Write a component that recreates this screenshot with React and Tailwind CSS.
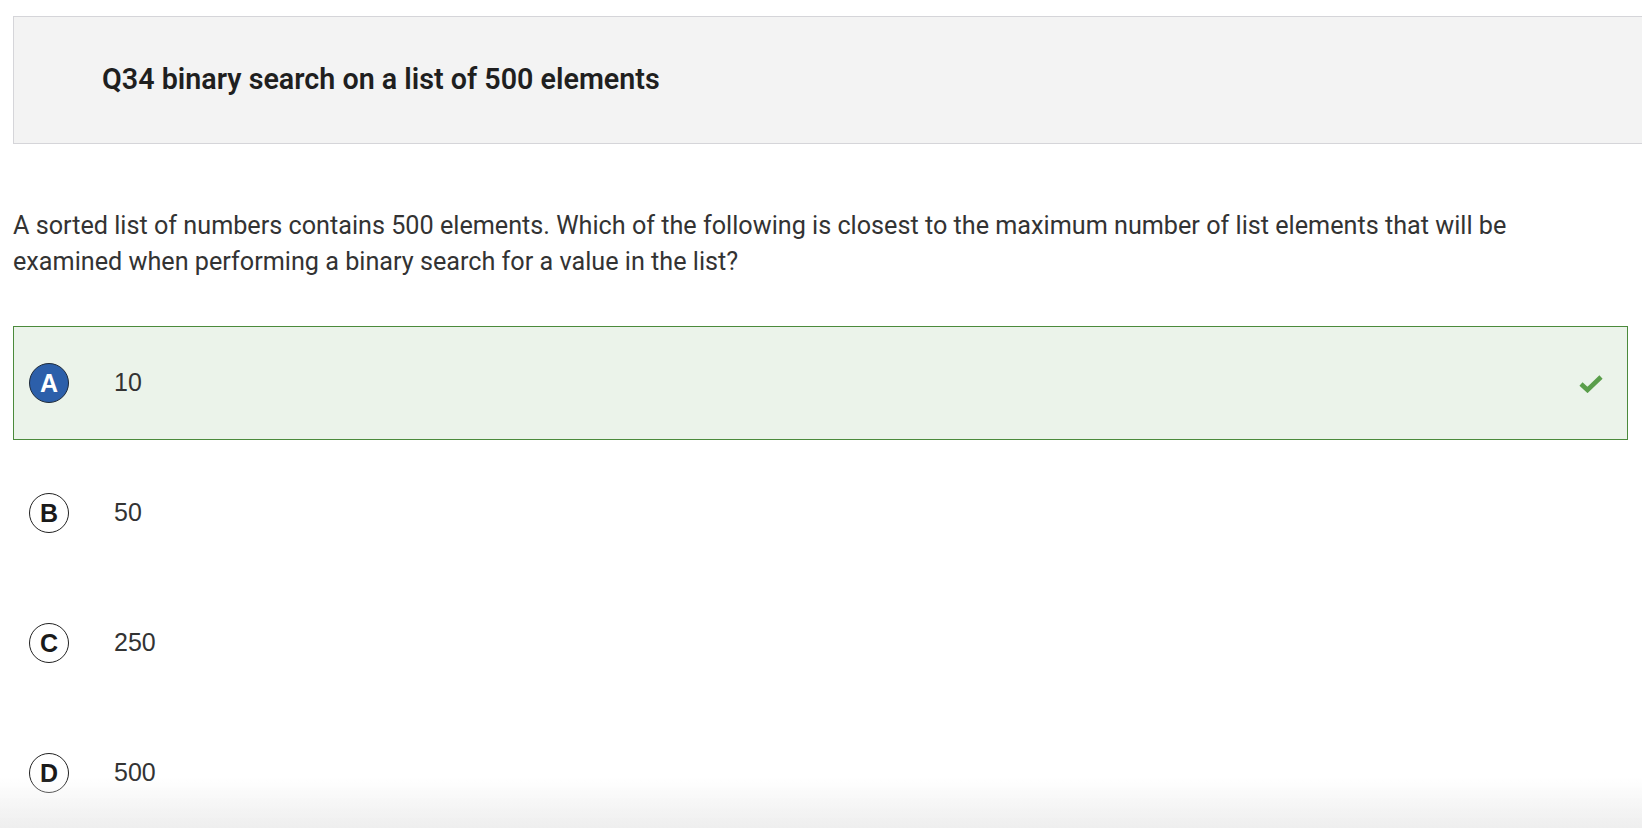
import React from "react";

const options = [
    { letter: "A", text: "10", selected: true, correct: true },
    { letter: "B", text: "50" },
    { letter: "C", text: "250" },
    { letter: "D", text: "500" },
];

function CheckIcon() {
    return (
        <svg width="24" height="19" viewBox="0 0 24 19" fill="none">
            <path
                d="M2 10 L8.5 16 L22 3"
                stroke="#5a9e4b"
                strokeWidth="4.6"
                strokeLinejoin="miter"
            />
        </svg>
    );
}

function OptionRow({ option }) {
    const boxClass = option.selected
        ? "border border-[#4b8a3c] bg-[#ebf3ea]"
        : "border border-transparent";

    return (
        <div className={`flex items-center h-[114px] pl-[15px] pr-[24px] ${boxClass}`}>
            {option.selected ? (
                <div className="w-10 h-10 rounded-full bg-[#2c5faa] border border-[#1e2a3a] flex items-center justify-center text-white text-[25px] leading-none font-bold font-['Liberation_Sans',Arial,sans-serif]">
                    {option.letter}
                </div>
            ) : (
                <div className="w-10 h-10 rounded-full bg-white border border-[#222] flex items-center justify-center text-[#1a1a1a] text-[25px] leading-none font-bold font-['Liberation_Sans',Arial,sans-serif]">
                    {option.letter}
                </div>
            )}
            <div className="ml-[45px] text-[25px] text-[#333] font-['Liberation_Sans',Arial,sans-serif]">
                {option.text}
            </div>
            <div className="flex-1" />
            {option.correct && <CheckIcon />}
        </div>
    );
}

export default function App() {
    return (
        <div className="relative min-h-[828px] bg-white overflow-hidden font-['Roboto',sans-serif]">
            <div className="pl-[13px]">
                {/* question header */}
                <div className="mt-4 h-[128px] -mr-4 bg-[#f3f3f3] border border-[#d5d5d9] flex items-center pl-[88px]">
                    <h1 className="text-[28.7px] font-semibold text-[#1f1f1f]">
                        Q34 binary search on a list of 500 elements
                    </h1>
                </div>

                <p className="mt-[64px] pr-[60px] text-[25.2px] leading-[36px] text-[#333]">
                    A sorted list of numbers contains 500 elements. Which of the following is closest to the maximum
                    number of list elements that will be examined when performing a binary search for a value in the
                    list?
                </p>

                <div className="mt-[46px] mr-[14px] flex flex-col gap-4">
                    {options.map((option) => (
                        <OptionRow key={option.letter} option={option} />
                    ))}
                </div>
            </div>

            {/* bottom fade */}
            <div className="fixed left-0 right-0 bottom-0 h-[50px] bg-gradient-to-b from-white/0 to-[#eeeeee] pointer-events-none" />
        </div>
    );
}
